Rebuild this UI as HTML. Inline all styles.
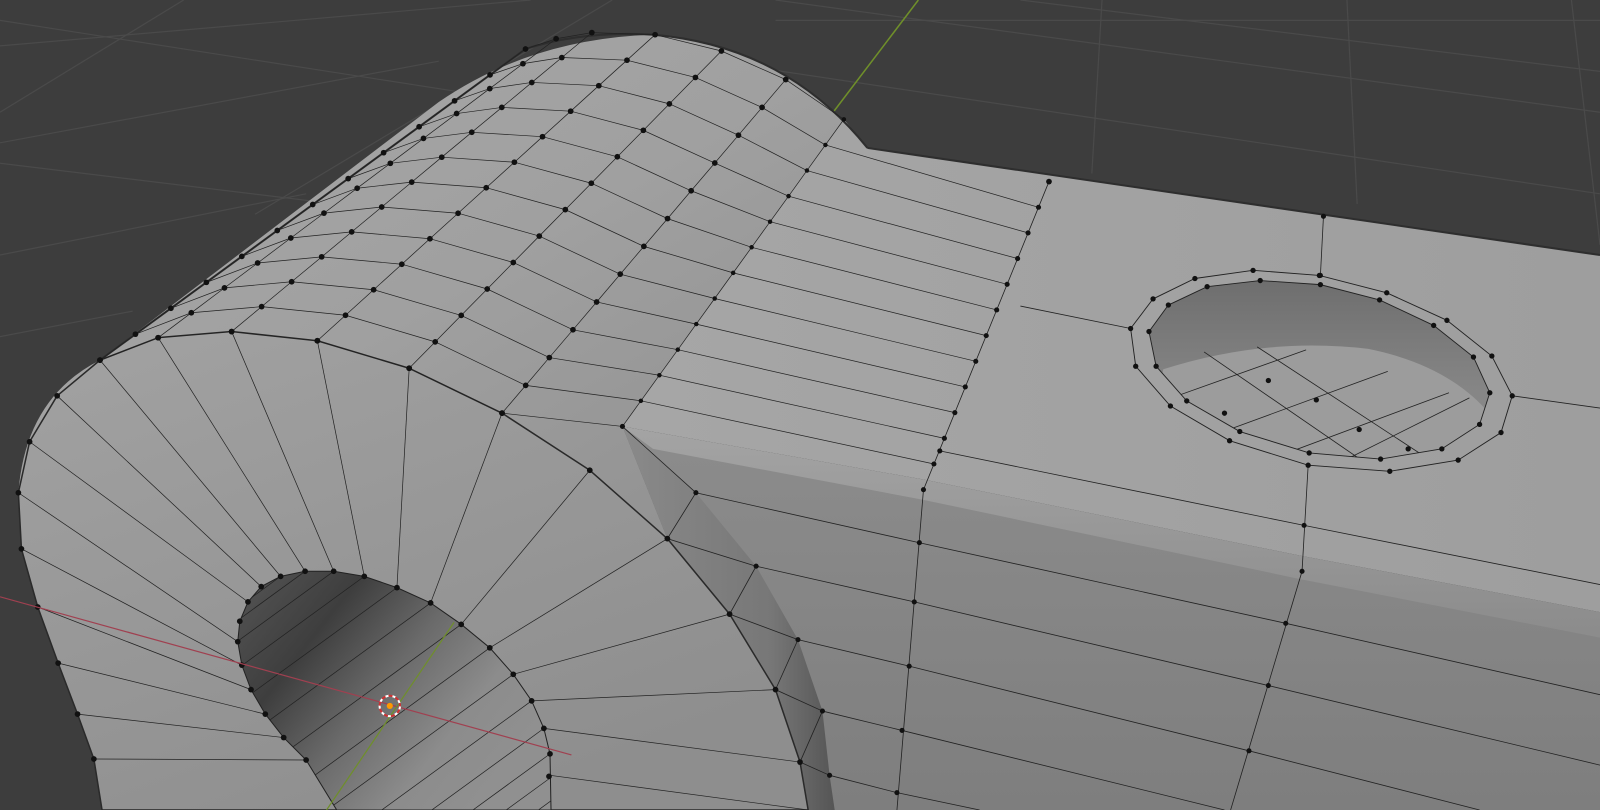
<!DOCTYPE html>
<html><head><meta charset="utf-8"><style>
html,body{margin:0;padding:0;background:#3d3d3d;overflow:hidden;width:1600px;height:810px}
svg{display:block;position:absolute;left:0;top:0;overflow:hidden}
</style></head><body>
<svg id="s" width="1600" height="810" viewBox="0 0 1568 794" preserveAspectRatio="none" xmlns="http://www.w3.org/2000/svg">
<defs>
<linearGradient id="cyl" x1="0" y1="0" x2="1" y2="1">
<stop offset="0" stop-color="#a8a8a8"/><stop offset="0.5" stop-color="#a0a0a0"/><stop offset="1" stop-color="#8e8e8e"/>
</linearGradient>
<linearGradient id="disk" x1="0" y1="0" x2="0.6" y2="1">
<stop offset="0" stop-color="#a2a2a2"/><stop offset="1" stop-color="#8e8e8e"/>
</linearGradient>
<linearGradient id="front" x1="0" y1="0" x2="0" y2="1">
<stop offset="0" stop-color="#8c8c8c"/><stop offset="1" stop-color="#7e7e7e"/>
</linearGradient>
<linearGradient id="top" x1="0" y1="0" x2="1" y2="0">
<stop offset="0" stop-color="#a6a6a6"/><stop offset="1" stop-color="#9e9e9e"/>
</linearGradient>
<linearGradient id="bev" x1="0" y1="0" x2="0.03" y2="1">
<stop offset="0" stop-color="#a4a4a4"/><stop offset="1" stop-color="#8c8c8c"/>
</linearGradient>
<linearGradient id="strip" x1="0" y1="0" x2="1" y2="0">
<stop offset="0" stop-color="#8a8a8a"/><stop offset="0.7" stop-color="#777"/><stop offset="1" stop-color="#555"/>
</linearGradient>
<linearGradient id="hole1" x1="0" y1="0" x2="1" y2="0.6">
<stop offset="0" stop-color="#555"/><stop offset="0.3" stop-color="#3e3e3e"/><stop offset="0.55" stop-color="#6a6a6a"/><stop offset="0.8" stop-color="#8c8c8c"/><stop offset="1" stop-color="#909090"/>
</linearGradient>
<linearGradient id="hole2" x1="0" y1="0" x2="0" y2="1">
<stop offset="0" stop-color="#6e6e6e"/><stop offset="0.6" stop-color="#858585"/><stop offset="1" stop-color="#8f8f8f"/>
</linearGradient>
<clipPath id="hc"><path d="M300,745 L278,723 L260,700 L246,676 L237,652 L233,629 L235,609 L243,590 L256,575 L275,565 L299,560 L327,560 L357,565 L389,576 L422,591 L452,612 L480,635 L503,661 L521,687 L533,714 L539,739 L540,794 L330,794 Z"/></clipPath>
<clipPath id="tc"><path d="M1235,275 L1294,279 L1352,294 L1405,319 L1444,350 L1460,385 L1450,416 L1413,440 L1353,450 L1283,444 L1215,423 L1163,393 L1133,359 L1126,325 L1145,299 L1183,281 Z"/></clipPath>
</defs>
<rect width="1568" height="794" fill="#3d3d3d"/>
<g stroke="#4a4a4a" stroke-width="1.2" fill="none">
<line x1="0" y1="45" x2="520" y2="0"/><line x1="0" y1="140" x2="430" y2="60"/>
<line x1="0" y1="250" x2="300" y2="190"/><line x1="0" y1="330" x2="130" y2="305"/>
<line x1="180" y1="0" x2="0" y2="110"/><line x1="600" y1="0" x2="250" y2="210"/>
<line x1="0" y1="20" x2="450" y2="90"/><line x1="0" y1="160" x2="330" y2="200"/>
<line x1="760" y1="0" x2="1568" y2="110"/><line x1="1000" y1="0" x2="1568" y2="70"/>
<line x1="700" y1="60" x2="1568" y2="190"/><line x1="1320" y1="0" x2="1330" y2="200"/>
<line x1="1080" y1="0" x2="1070" y2="170"/><line x1="1540" y1="0" x2="1568" y2="240"/>
<line x1="760" y1="20" x2="1568" y2="20"/>
</g>
<line x1="900" y1="0" x2="815" y2="112" stroke="#6f8f2a" stroke-width="1.5"/>
<polygon points="610,418 905,480 1276,560 1568,617 1568,794 790,794 760,676 715,602 654,528" fill="url(#front)"/>
<polygon points="827,117 850,145 1568,250 1568,600 1276,545 905,470 610,418" fill="url(#top)"/>
<polygon points="610,418 905,470 1276,545 1568,600 1568,625 1276,568 905,490 640,440" fill="url(#bev)"/>
<line x1="850" y1="145" x2="1568" y2="250" stroke="#2e2e2e" stroke-width="2"/>
<path d="M1235,275 L1294,279 L1352,294 L1405,319 L1444,350 L1460,385 L1450,416 L1413,440 L1353,450 L1283,444 L1215,423 L1163,393 L1133,359 L1126,325 L1145,299 L1183,281 Z" fill="url(#hole2)"/>
<g clip-path="url(#tc)">
<path d="M1140,362 Q1240,330 1341,342 Q1430,360 1470,419 L1470,470 L1120,470 Z" fill="#9c9c9c"/>
<g stroke="#222" stroke-width="0.8" fill="none">
<path d="M1180,345 L1340,455"/><path d="M1232,340 L1400,450"/><path d="M1120,400 L1280,343"/><path d="M1180,430 L1360,364"/><path d="M1240,452 L1420,385"/><path d="M1300,460 L1440,390"/><path d="M1140,400 L1210,455"/>
</g>
</g>
<g stroke="#222" stroke-width="0.9" fill="none">
<path d="M1228,265 L1293,270 L1359,287 L1418,314 L1462,349 L1482,388 L1471,424 L1429,451 L1362,462 L1282,456 L1205,432 L1147,398 L1113,359 L1108,322 L1130,293 L1171,273 Z"/>
<path d="M1235,275 L1294,279 L1352,294 L1405,319 L1444,350 L1460,385 L1450,416 L1413,440 L1353,450 L1283,444 L1215,423 L1163,393 L1133,359 L1126,325 L1145,299 L1183,281 Z"/>
</g>
<path d="M18,483 Q25,390 98,353 L430,100 Q520,38 640,34 Q770,45 850,145 L827,117 L610,418 L654,528 L578,461 L492,405 L401,361 L311,334 L227,325 L155,331 L98,353 Z" fill="url(#cyl)"/>
<path d="M515,48 L98,353" stroke="#2e2e2e" stroke-width="2" fill="none"/>
<path d="M515,48 Q570,30 640,34 Q770,45 850,145" stroke="#2e2e2e" stroke-width="2" fill="none"/>
<path d="M610,418 L654,528 L715,602 L760,676 L784,747 L792,794 L818,794 L813,760 L806,697 L782,627 L741,555 L682,483 Z" fill="url(#strip)"/>
<path d="M18,483 L29,433 L56,388 L98,353 L155,331 L227,325 L311,334 L401,361 L492,405 L578,461 L654,528 L715,602 L760,676 L784,747 L792,794 L100,794 L92,744 L76,700 L57,650 L37,595 L21,538 Z" fill="url(#disk)" stroke="#2a2a2a" stroke-width="1.5" stroke-linejoin="round"/>
<path d="M300,745 L278,723 L260,700 L246,676 L237,652 L233,629 L235,609 L243,590 L256,575 L275,565 L299,560 L327,560 L357,565 L389,576 L422,591 L452,612 L480,635 L503,661 L521,687 L533,714 L539,739 L540,794 L330,794 Z" fill="url(#hole1)" stroke="#222" stroke-width="1"/>
<g id="wf" stroke="#222" stroke-width="0.8" fill="none">
<path d="M1028,178 L905,480 L879,794"/><path d="M1297,212 L1294,270"/><path d="M1282,456 L1276,560 L1206,794"/>
<path d="M921,442 L1278,515 L1568,573"/>
<path d="M682,483 L901,532 L1260,611 L1568,681"/>
<path d="M741,555 L896,590 L1243,672 L1568,750"/>
<path d="M782,627 L891,653 L1224,736 L1450,794"/>
<path d="M806,697 L884,716 L1200,794"/>
<path d="M813,760 L879,777 L960,794"/>
<path d="M1482,388 L1568,400"/><path d="M1108,322 L1000,300"/>
<path d="M610,418 L682,483 L654,528 L741,555 L715,602 L782,627 L760,676 L806,697 L784,747 L813,760"/>
</g>
<g id="dots" fill="#111"></g>
<line x1="0" y1="585" x2="560" y2="740" stroke="#a04050" stroke-width="1.2"/>
<line x1="445" y1="610" x2="320" y2="794" stroke="#6f8f2a" stroke-width="1.2"/>
<circle cx="382" cy="692" r="10" fill="none" stroke="#fff" stroke-width="2" stroke-dasharray="4,3"/>
<circle cx="382" cy="692" r="10" fill="none" stroke="#c33" stroke-width="2" stroke-dasharray="4,3" stroke-dashoffset="3.5"/>
<circle cx="382" cy="692" r="3" fill="#f90"/>
</svg>
<script>
(function(){
var NS="http://www.w3.org/2000/svg",svg=document.getElementById("s"),wf=document.getElementById("wf"),dots=document.getElementById("dots");
function pl(pts,w,parent){var p=document.createElementNS(NS,"polyline");p.setAttribute("points",pts.map(function(q){return q[0].toFixed(1)+","+q[1].toFixed(1)}).join(" "));if(w)p.setAttribute("stroke-width",w);(parent||wf).appendChild(p);}
function dot(q,r){if(q[1]>792)return;var c=document.createElementNS(NS,"circle");c.setAttribute("cx",q[0]);c.setAttribute("cy",q[1]);c.setAttribute("r",r||2.8);dots.appendChild(c);}
function L(a,b,t){return [a[0]+(b[0]-a[0])*t,a[1]+(b[1]-a[1])*t];}
var F=[[98,353],[155,331],[227,325],[311,334],[401,361],[492,405],[610,418]];
var B=[[515,48],[545,38],[580,32],[642,34],[707,50],[770,78],[827,117]];
var NL=12,n=F.length;
for(var i=0;i<n;i++){var line=[];for(var j=0;j<=NL;j++){var q=L(F[i],B[i],j/NL);line.push(q);dot(q,i==n-1?2.2:2.8);}pl(line,0.7);}
for(var j=0;j<=NL;j++){var r=[];for(var i=0;i<n;i++)r.push(L(F[i],B[i],j/NL));pl(r,0.7);}
for(var k=1;k<NL;k++){var a=L([610,418],[827,117],k/NL),b=L([905,480],[1028,178],k/NL);pl([a,b],0.7);dot(b,2.5);}
dot([1028,178]);
var pairs=[[[92,744],[300,745]],[[76,700],[278,723]],[[57,650],[260,700]],[[37,595],[246,676]],[[21,538],[237,652]],[[18,483],[233,629]],[[29,433],[243,590]],[[56,388],[256,575]],[[98,353],[275,565]],[[155,331],[299,560]],[[227,325],[327,560]],[[311,334],[357,565]],[[401,361],[389,576]],[[492,405],[422,591]],[[578,461],[452,612]],[[654,528],[480,635]],[[715,602],[503,661]],[[760,676],[521,687]],[[784,747],[533,714]],[[792,794],[539,760]],[[100,794],[320,794]]];
pairs.forEach(function(p){pl(p,0.7);dot(p[0]);});
[[300,745],[278,723],[260,700],[246,676],[237,652],[233,629],[235,609],[243,590],[256,575],[275,565],[299,560],[327,560],[357,565],[389,576],[422,591],[452,612],[480,635],[503,661],[521,687],[533,714],[539,739],[538,761]].forEach(function(q){dot(q);});
var g=document.createElementNS(NS,"g");g.setAttribute("clip-path","url(#hc)");g.setAttribute("stroke","#222");g.setAttribute("stroke-width","0.7");g.setAttribute("fill","none");svg.insertBefore(g,wf);
[[243,590],[256,575],[275,565],[299,560],[327,560],[357,565],[389,576],[422,591],[452,612],[480,635],[503,661],[521,687],[533,714],[539,739],[540,762],[540,785]].forEach(function(q){pl([q,[q[0]-0.81*230,q[1]+0.59*230]],0.7,g);});
[[1228,265],[1293,270],[1359,287],[1418,314],[1462,349],[1482,388],[1471,424],[1429,451],[1362,462],[1282,456],[1205,432],[1147,398],[1113,359],[1108,322],[1130,293],[1171,273],
 [1235,275],[1294,279],[1352,294],[1405,319],[1444,350],[1460,385],[1450,416],[1413,440],[1353,450],[1283,444],[1215,423],[1163,393],[1133,359],[1126,325],[1145,299],[1183,281],
 [1243,373],[1290,392],[1200,405],[1332,421],[1380,440]].forEach(function(q){dot(q,2.6);});
[[905,480],[921,442],[901,532],[896,590],[891,653],[884,716],[879,777],[1278,515],[1276,560],[1260,611],[1243,672],[1224,736],[1297,212],[1294,270],[682,483],[741,555],[782,627],[806,697],[813,760],[654,528],[715,602],[760,676],[784,747],[610,418]].forEach(function(q){dot(q,2.5);});
})();
</script>
</body></html>
